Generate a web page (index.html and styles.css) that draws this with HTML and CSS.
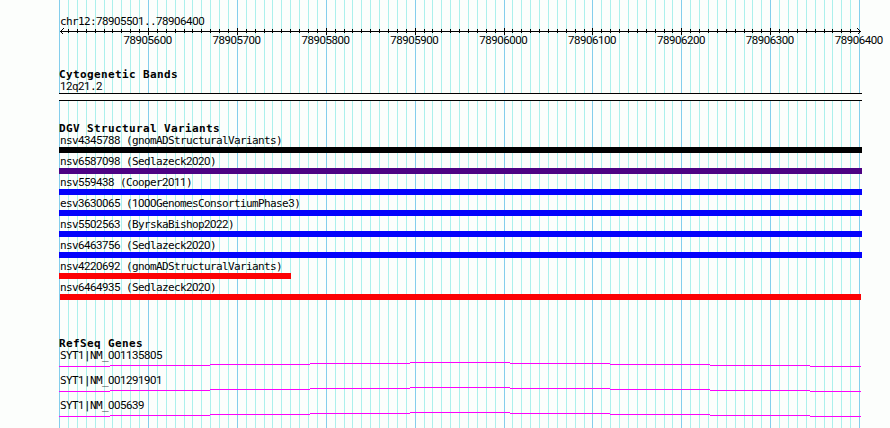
FILE: index.html
```
<!DOCTYPE html>
<html lang="en">
<head>
<meta charset="utf-8">
<title>chr12:78905501..78906400</title>
<link rel="stylesheet" href="styles.css">
</head>
<body>
<main class="browser">
<svg class="grid" width="890" height="428" aria-hidden="true">
<defs><pattern id="minor" x="59" y="0" width="80" height="428" patternUnits="userSpaceOnUse"><path d="M.5 0V428M9.5 0V428M18.5 0V428M27.5 0V428M36.5 0V428M45.5 0V428M53.5 0V428M62.5 0V428M71.5 0V428"/></pattern></defs>
<rect x="59" width="801" height="428" fill="url(#minor)"/>
<path class="major" d="M59.5 0V428M148.5 0V428M237.5 0V428M326.5 0V428M415.5 0V428M504.5 0V428M592.5 0V428M681.5 0V428M770.5 0V428M859.5 0V428"/>
</svg>
<section class="ruler">
<div class="label">chr12:<span>78905501</span>..<span>78906400</span></div>
<svg class="axis" width="804" height="9" aria-hidden="true">
<defs><pattern id="ticks" x="1" width="80" height="9" patternUnits="userSpaceOnUse"><path d="M.5 2V6M9.5 2V6M18.5 2V6M27.5 2V6M36.5 2V6M45.5 2V6M53.5 2V6M62.5 2V6M71.5 2V6"/></pattern></defs>
<rect x="3" width="797" height="9" fill="url(#ticks)"/>
<path d="M2 4.500H803M90.500 1V8M179.500 1V8M268.500 1V8M357.500 1V8M446.500 1V8M534.500 1V8M623.500 1V8M712.500 1V8M5.500 1.500L2.500 4.500L5.500 7.500M799.500 1.500L802.500 4.500L799.500 7.500"/>
</svg>
<div class="numbers"><span>78905600</span><span>78905700</span><span>78905800</span><span>78905900</span><span>78906000</span><span>78906100</span><span>78906200</span><span>78906300</span><span>78906400</span></div>
</section>
<section class="bands">
<h2>Cytogenetic Bands</h2>
<div class="label"><span>12</span>q<span>21</span>.<span>2</span></div>
<div class="band"></div>
</section>
<section class="variants">
<h2>DGV Structural Variants</h2>
<div class="label">nsv<span>4345788</span> (gnomADStructuralVariants)</div><div class="bar black"></div>
<div class="label">nsv<span>6587098</span> (Sedlazeck<span>2020</span>)</div><div class="bar indigo"></div>
<div class="label">nsv<span>559438</span> (Cooper<span>2011</span>)</div><div class="bar blue"></div>
<div class="label">esv<span>3630065</span> (<span>1000</span>GenomesConsortiumPhase<span>3</span>)</div><div class="bar blue"></div>
<div class="label">nsv<span>5502563</span> (ByrskaBishop<span>2022</span>)</div><div class="bar blue"></div>
<div class="label">nsv<span>6463756</span> (Sedlazeck<span>2020</span>)</div><div class="bar blue"></div>
<div class="label">nsv<span>4220692</span> (gnomADStructuralVariants)</div><div class="bar red short"></div>
<div class="label">nsv<span>6464935</span> (Sedlazeck<span>2020</span>)</div><div class="bar red inset"></div>
</section>
<section class="genes">
<h2>RefSeq Genes</h2>
<div class="label">SYT<span>1</span>|NM_<span>001135805</span></div>
<svg class="intron" width="802" height="5"><path id="arc" d="M0 4.500H51M51 3.500H151M151 2.500H251M251 1.500H351M351 .5H451M451 1.500H551M551 2.500H651M651 3.500H751M751 4.500H802"/></svg>
<div class="label">SYT<span>1</span>|NM_<span>001291901</span></div>
<svg class="intron" width="802" height="5"><use href="#arc"/></svg>
<div class="label">SYT<span>1</span>|NM_<span>005639</span></div>
<svg class="intron" width="802" height="5"><use href="#arc"/></svg>
</section>
</main>
</body>
</html>
```
FILE: styles.css
```
* { box-sizing: border-box; }
body { margin: 0; background: #fcfefc; color: #000; }
svg { display: block; shape-rendering: crispEdges; }
.browser { position: relative; width: 890px; height: 428px; overflow: hidden; padding: 15px 0 0 59px; }
.grid { position: absolute; left: 0; top: 0; z-index: -1; }
.grid path { stroke: #acf0ec; }
.grid .major { stroke: #84ceec; }
.label {
  height: 12px; padding-left: 1px; white-space: pre;
  font: 11px/12px "DejaVu Sans Mono", monospace; letter-spacing: -0.622px;
}
.label span, .numbers span { font-family: Roboto, sans-serif; font-size: 11.5px; letter-spacing: -0.457px; }
h2 { margin: 0; height: 12px; font: bold 11px/12px "DejaVu Sans Mono", monospace; letter-spacing: 0.378px; white-space: pre; }
.axis { margin-left: -1px; }
.axis path { stroke: #000; fill: none; }
.numbers { display: grid; grid-template-columns: repeat(9, 88.9px); width: 830px; margin: -1px 0 0 44.2px; height: 12px; line-height: 11px; }
.numbers span { text-align: center; line-height: 11px; }
.bands { margin-top: 21px; }
.band { width: 803px; height: 8px; margin-top: 1px; border: solid #000; border-width: 1px 0; background: #fcfefc; }
.variants { margin-top: 21px; }
.variants .label { height: 13px; line-height: 12px; }
h2 { line-height: 13px; }
.bar { width: 803px; height: 6px; margin-bottom: 2px; }
.black { background: #000; }
.indigo { background: #4c0284; }
.blue { background: #0402fc; }
.red { background: #fc0204; }
.short { width: 232px; }
.inset { width: 801px; margin-left: 1px; }
.genes { margin-top: 37px; }
.intron { margin-bottom: 7px; }
.intron path { stroke: #fc02fc; fill: none; }
.genes .label { height: 13px; }
```
